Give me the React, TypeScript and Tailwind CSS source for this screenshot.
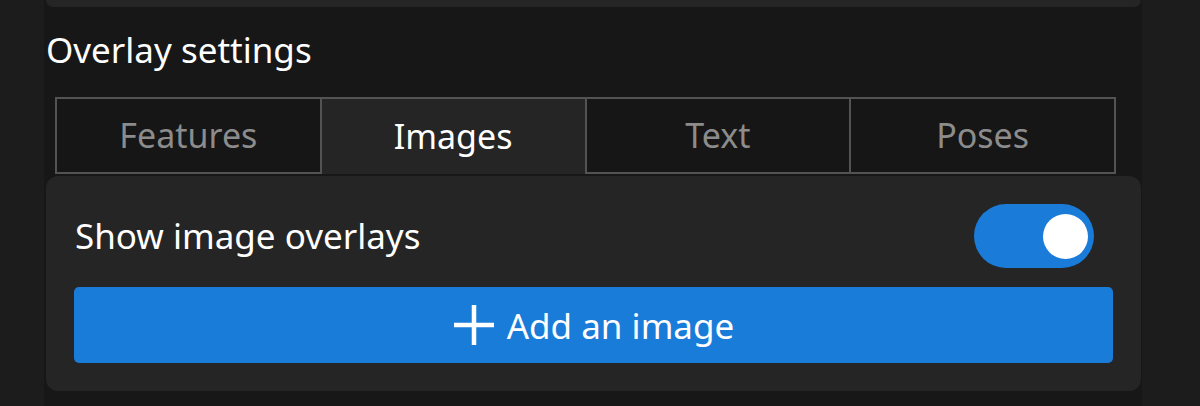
const tabs = ["Features", "Images", "Text", "Poses"];

export default function App() {
  const active = "Images";

  return (
    <div
      className="flex h-[406px] w-full overflow-hidden bg-[#171717] text-white"
      style={{ fontFamily: '"Noto Sans", "Open Sans", sans-serif' }}
    >
      <div className="w-[44px] shrink-0 bg-[#1c1c1c]" />

      <div className="flex w-[1098px] shrink-0 flex-col pl-[2px] pr-[1px]">
        <div className="h-[7px] rounded-b-[10px] bg-[#252525]" />

        <h2 className="mt-[20px] h-[46px] text-[35px] leading-[46px]">Overlay settings</h2>

        <div className="ml-[9px] mr-[25px] mt-[24px] flex">
          {tabs.map((tab, i) => {
            const isActive = tab === active;
            return (
              <div
                key={tab}
                className={`flex h-[77px] flex-1 items-center justify-center border-l-2 border-t-2 border-[#535353] text-[34px] ${
                  i === tabs.length - 1 ? "border-r-2" : ""
                } ${
                  isActive
                    ? "bg-[#252525] text-white"
                    : "border-b-2 bg-[#161616] text-[#8c8c8c]"
                }`}
              >
                {tab}
              </div>
            );
          })}
        </div>

        <div className="mt-[2px] flex flex-col gap-[19px] rounded-[12px] bg-[#252525] px-[28px] pb-[28px] pt-[28px]">
          <div className="flex items-center justify-between pl-[1px] pr-[19px]">
            <span className="text-[35px]">Show image overlays</span>
            <div className="flex h-[64px] w-[120px] items-center justify-end rounded-full bg-[#1a7bd9] pr-[6px]">
              <div className="h-[45px] w-[45px] rounded-full bg-white" />
            </div>
          </div>

          <button className="flex h-[76px] items-center justify-center gap-[12px] rounded-[5px] bg-[#1a7cd9] text-[35px] text-white">
            <svg width="42" height="42" viewBox="0 0 42 42" className="shrink-0">
              <path d="M21 1v40M1 21h40" stroke="currentColor" strokeWidth="4.5" />
            </svg>
            <span className="leading-none">Add an image</span>
          </button>
        </div>
      </div>

      <div className="flex-1 bg-[#1c1c1c]" />
    </div>
  );
}
